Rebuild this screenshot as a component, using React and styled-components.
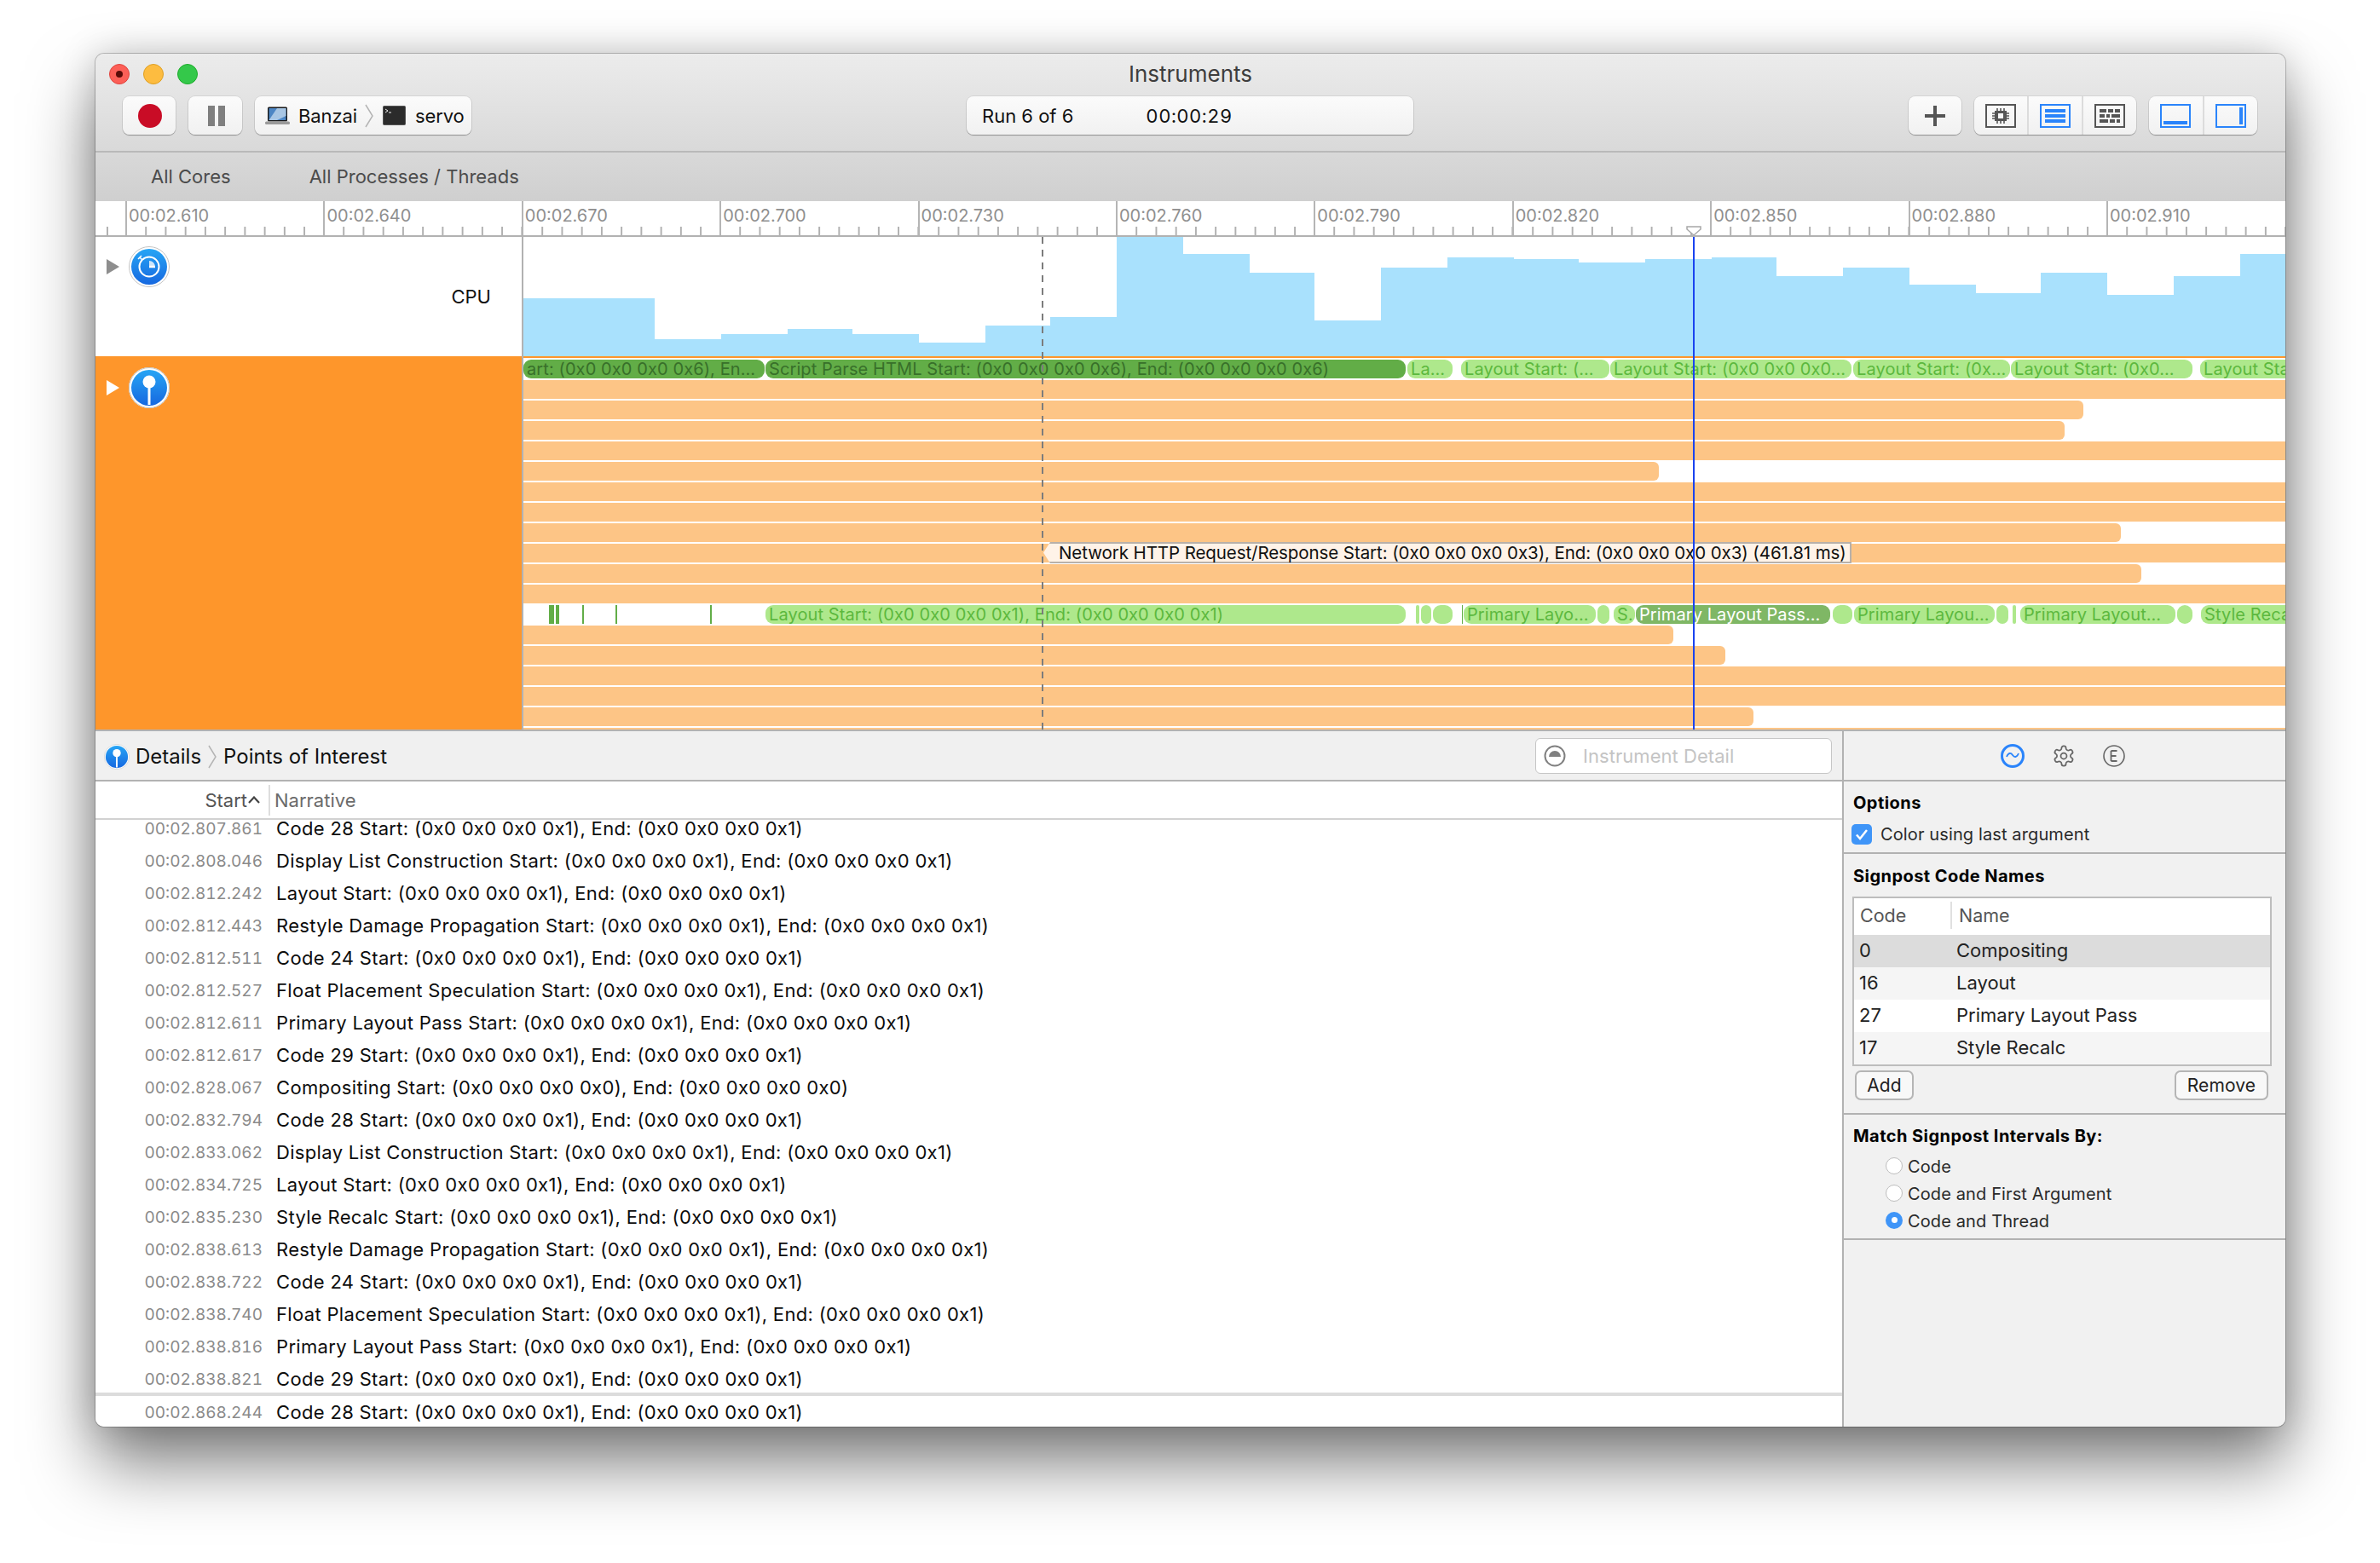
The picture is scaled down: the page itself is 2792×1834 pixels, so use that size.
import styled, { createGlobalStyle } from "styled-components";

const GlobalStyle = createGlobalStyle`
  html, body {
    margin: 0;
    height: 100%;
    background: #fff;
    overflow: hidden;
  }
  body {
    font-family: "Inter", "Liberation Sans", sans-serif;
    color: #111;
  }
  * { box-sizing: border-box; }
`;

const Win = styled.div`
  margin: 63px 0 0 112px;
  width: 2569px;
  height: 1611px;
  border-radius: 10px;
  overflow: hidden;
  display: flex;
  flex-direction: column;
  background: #f0f0f0;
  box-shadow: 0 0 0 1px rgba(0, 0, 0, 0.22), 0 44px 80px rgba(0, 0, 0, 0.5),
    0 0 44px rgba(0, 0, 0, 0.18);
`;

const Header = styled.header`
  height: 173px;
  flex: none;
  display: flex;
  flex-direction: column;
  background: linear-gradient(#ececec, #cfcfcf);
`;

const TitleBar = styled.div`
  height: 50px;
  flex: none;
  display: grid;
  grid-template-columns: 1fr auto 1fr;
  align-items: center;
  padding: 0 16px 3px;
`;

const Lights = styled.div`
  display: flex;
  gap: 16px;
`;

const Light = styled.span`
  width: 24px;
  height: 24px;
  border-radius: 50%;
  background: ${(p) => p.$color};
  border: 1px solid ${(p) => p.$edge};
  display: flex;
  align-items: center;
  justify-content: center;
  &::after {
    content: "";
    display: ${(p) => (p.$dot ? "block" : "none")};
    width: 8px;
    height: 8px;
    border-radius: 50%;
    background: #5a0b07;
  }
`;

const Title = styled.div`
  font-size: 26px;
  color: #3d3d3d;
`;

const ToolRow = styled.div`
  height: 66px;
  flex: none;
  display: grid;
  grid-template-columns: 1fr auto 1fr;
  align-items: start;
  padding: 0 33px 0 32px;
  border-bottom: 2px solid #b9b9b9;
`;

const ToolGroup = styled.div`
  display: flex;
  gap: 15px;
  justify-content: ${(p) => (p.$end ? "flex-end" : "flex-start")};
`;

const Btn = styled.div`
  height: 45px;
  width: ${(p) => p.$w}px;
  display: flex;
  align-items: center;
  border-radius: 8px;
  background: linear-gradient(#fbfbfb, #f1f1f1);
  box-shadow: 0 0 0 1px rgba(0, 0, 0, 0.07), 0 1px 1px rgba(0, 0, 0, 0.3);
  justify-content: ${(p) => (p.$left ? "flex-start" : "center")};
  padding-left: ${(p) => p.$nudge || 0}px;
  font-size: 22px;
  color: #111;
`;

const Cell = styled.div`
  flex: 1;
  height: 100%;
  display: flex;
  align-items: center;
  justify-content: center;
  & + & {
    border-left: 2px solid #dcdcdc;
  }
`;

const PathBtn = styled(Btn)`
  padding-left: 12px;
`;

const PathName = styled.span`
  display: flex;
  margin: ${(p) => p.$m};
  letter-spacing: -0.1px;
`;

const RunBox = styled(Btn)`
  padding-left: 18px;
`;

const RunTime = styled.span`
  margin-left: 85px;
  font-variant-numeric: tabular-nums;
  letter-spacing: 0.5px;
`;

const FilterBar = styled.div`
  flex: 1;
  display: flex;
  align-items: center;
  padding-left: 65px;
  gap: 92px;
  font-size: 22px;
  color: #4c4c4c;
  padding-bottom: 2px;
`;

const Ruler = styled.div`
  position: relative;
  height: 42px;
  flex: none;
  display: flex;
  background: #fff;
  border-bottom: 2px solid #b2b2b2;
  overflow: hidden;
`;

const RulerSeg = styled.div`
  flex: none;
  width: ${(p) => p.$w}px;
  height: 40px;
  padding: 5px 0 0 2px;
  font-size: 20px;
  line-height: 24px;
  white-space: nowrap;
  color: #8f8f8f;
  border-left: ${(p) => (p.$lead ? "none" : "2px solid #b5b5b5")};
  background-image: linear-gradient(to right, #b0b0b0 1.5px, transparent 1.5px);
  background-size: 23.24px 10px;
  background-position: ${(p) => (p.$lead ? "13px" : "-2px")} bottom;
  background-repeat: repeat-x;
`;

const Playhead = styled.svg`
  position: absolute;
  left: 1866px;
  bottom: 0;
`;

const Tracks = styled.div`
  position: relative;
  height: 580px;
  flex: none;
  display: flex;
  flex-direction: column;
  border-bottom: 2px solid #b2b2b2;
  background: #fff;
`;

const TrackRow = styled.div`
  display: flex;
  height: ${(p) => p.$h}px;
  flex: none;
`;

const TrackHead = styled.div`
  position: relative;
  width: 502px;
  flex: none;
  background: ${(p) => p.$bg};
  border-right: 2px solid #b2b2b2;
  display: flex;
  align-items: flex-start;
  padding: ${(p) => p.$pad};
  gap: 11px;
`;

const Disclosure = styled.span`
  width: 0;
  height: 0;
  margin-top: ${(p) => p.$mt}px;
  border-left: 15px solid ${(p) => p.$color};
  border-top: 9px solid transparent;
  border-bottom: 9px solid transparent;
`;

const TrackLabel = styled.span`
  position: absolute;
  right: 36px;
  top: 57px;
  font-size: 22px;
  line-height: 26px;
`;

const CpuArea = styled.div`
  flex: 1;
`;

const SignpostArea = styled.div`
  flex: 1;
  min-width: 0;
  border-top: 2px solid #fe962b;
  padding-top: 2px;
  display: flex;
  flex-direction: column;
  gap: 2px;
  overflow: hidden;
`;

const LaneRow = styled.div`
  position: relative;
  height: 22px;
  flex: none;
`;

const OrangeBar = styled.div`
  height: 22px;
  background: #fdc586;
  border-radius: ${(p) => (p.$short ? "0 6px 6px 0" : "0")};
`;

const Seg = styled.div`
  position: absolute;
  top: 0;
  height: 22px;
  border-radius: 9px;
  padding-left: 4px;
  font-size: 20px;
  line-height: 22px;
  letter-spacing: 0.1px;
  white-space: nowrap;
  overflow: hidden;
  background: ${(p) =>
    p.$kind === "dark" ? "#62ad47" : p.$kind === "mid" ? "#7fb765" : "#aee88c"};
  color: ${(p) =>
    p.$kind === "dark" ? "#38702a" : p.$kind === "mid" ? "#fff" : "#5cb83e"};
`;

const Stroke = styled.div`
  position: absolute;
  top: 0;
  height: 22px;
  background: #62ad47;
`;

const Note = styled.div`
  position: absolute;
  left: 610px;
  top: -2px;
  width: 948px;
  height: 25px;
  z-index: 1;
  display: flex;
  align-items: center;
  padding-left: 18px;
  font-size: 20.5px;
  white-space: nowrap;
  letter-spacing: -0.08px;
  color: #111;
  background: #fff3e8;
  border: 2px solid #b8b1aa;
  border-left: none;
  clip-path: polygon(0 50%, 8px 0, 100% 0, 100% 100%, 8px 100%);
`;

const DashLine = styled.div`
  position: absolute;
  left: 1110px;
  top: 0;
  bottom: 0;
  width: 2px;
  z-index: 2;
  background: repeating-linear-gradient(#7c7c7c 0 8px, transparent 8px 15px);
`;

const BlueLine = styled.div`
  position: absolute;
  left: 1874px;
  top: 0;
  bottom: 0;
  width: 2px;
  z-index: 2;
  background: #1a44f0;
`;

const Bottom = styled.div`
  flex: 1;
  min-height: 0;
  display: flex;
`;

const DetailPane = styled.section`
  flex: 1;
  min-width: 0;
  display: flex;
  flex-direction: column;
  background: #fff;
`;

const DetailBar = styled.div`
  height: 59px;
  flex: none;
  display: flex;
  align-items: center;
  padding: 2px 12px 0 10px;
  background: #f0f0f0;
  border-bottom: 2px solid #b2b2b2;
  font-size: 24px;
  color: #111;
`;

const Crumb = styled.span`
  display: flex;
  margin-left: ${(p) => p.$ml}px;
`;

const SearchBox = styled.div`
  margin: -2px 0 0 auto;
  width: 348px;
  height: 42px;
  display: flex;
  align-items: center;
  gap: 20px;
  padding-left: 9px;
  background: #fff;
  border: 1.5px solid #c6c6c6;
  border-radius: 6px;
  font-size: 22px;
  letter-spacing: 0.05px;
  color: #c4c4c4;
`;

const TableHead = styled.div`
  height: 45px;
  flex: none;
  display: flex;
  align-items: center;
  border-bottom: 2px solid #d2d2d2;
  font-size: 22px;
  color: #6b6b6b;
`;

const StartCol = styled.div`
  width: 205px;
  height: 36px;
  display: flex;
  align-items: center;
  justify-content: flex-end;
  gap: 1px;
  padding-right: 10px;
  border-right: 2px solid #dedede;
  color: #555;
`;

const NarrativeCol = styled.div`
  padding-left: 5px;
`;

const RowList = styled.div`
  flex: 1;
  overflow: hidden;
`;

const RowTrack = styled.div`
  margin-top: -9px;
`;

const Row = styled.div`
  height: 38px;
  box-sizing: content-box;
  display: flex;
  align-items: center;
  ${(p) => p.$divided && "border-top: 4px solid #dcdcdc; margin-top: -3px;"}
`;

const RowTime = styled.span`
  width: 196px;
  text-align: right;
  font-size: 19px;
  font-variant-numeric: tabular-nums;
  color: #8a8a8a;
`;

const RowText = styled.span`
  margin-left: 16px;
  font-size: 22px;
  letter-spacing: 0.33px;
  white-space: nowrap;
  color: #0d0d0d;
`;

const Inspector = styled.aside`
  width: 520px;
  flex: none;
  display: flex;
  flex-direction: column;
  background: #f1f1f1;
  border-left: 2px solid #b2b2b2;
  font-size: 20px;
  letter-spacing: 0.12px;
  color: #2a2a2a;
`;

const InspTabs = styled.div`
  height: 59px;
  flex: none;
  display: flex;
  align-items: center;
  justify-content: center;
  gap: 31px;
  padding-right: 4px;
  border-bottom: 2px solid #b2b2b2;
`;

const Section = styled.div`
  height: ${(p) => p.$h}px;
  flex: none;
  display: flex;
  flex-direction: column;
  padding: ${(p) => p.$pad};
  border-bottom: 2px solid #b2b2b2;
`;

const Heading = styled.div`
  font-size: 20px;
  line-height: 24px;
  font-weight: 700;
  letter-spacing: 0.45px;
  color: #000;
  margin-left: 11px;
`;

const CheckRow = styled.div`
  display: flex;
  align-items: center;
  gap: 10px;
  margin: 13px 0 0 9px;
  line-height: 24px;
`;

const CheckBox = styled.span`
  width: 24px;
  height: 24px;
  border-radius: 5px;
  background: #3f95f8;
  display: flex;
  align-items: center;
  justify-content: center;
`;

const CodeTable = styled.div`
  width: 492px;
  height: 199px;
  margin: 12px 0 0 10px;
  border: 2px solid #bdbdbd;
  background: #fff;
  flex: none;
  letter-spacing: 0;
`;

const CodeHead = styled.div`
  height: 43px;
  display: flex;
  align-items: center;
  padding-bottom: 3px;
  font-size: 21.5px;
  color: #555;
`;

const CodeHeadCell = styled.div`
  width: ${(p) => p.$w}px;
  height: 32px;
  display: flex;
  align-items: center;
  padding-left: ${(p) => p.$pl}px;
  ${(p) => p.$rule && "border-right: 2px solid #e0e0e0;"}
`;

const CodeRow = styled.div`
  height: 38px;
  display: flex;
  align-items: center;
  padding-bottom: 3px;
  font-size: 22px;
  background: ${(p) => p.$bg};
  color: #222;
`;

const CodeCell = styled.span`
  width: 120px;
  padding-left: 6px;
`;

const ButtonRow = styled.div`
  display: flex;
  justify-content: space-between;
  margin: 5px 20px 0 13px;
`;

const SmallButton = styled.div`
  height: 35px;
  width: ${(p) => p.$w}px;
  display: flex;
  align-items: center;
  justify-content: center;
  border: 2px solid #b5b5b5;
  border-radius: 7px;
  background: #f8f8f8;
  font-size: 21px;
  color: #222;
`;

const RadioRow = styled.div`
  display: flex;
  align-items: center;
  height: 32px;
  margin-left: 49px;
  gap: 6px;
`;

const RadioList = styled.div`
  margin-top: 8px;
`;

const Radio = styled.span`
  width: 20px;
  height: 20px;
  border-radius: 50%;
  margin-top: -3px;
  background: ${(p) => (p.$on ? "#3f95f8" : "#fff")};
  border: ${(p) => (p.$on ? "none" : "1.5px solid #bdbdbd")};
  display: flex;
  align-items: center;
  justify-content: center;
  &::after {
    content: "";
    display: ${(p) => (p.$on ? "block" : "none")};
    width: 7px;
    height: 7px;
    border-radius: 50%;
    background: #fff;
  }
`;

const RULER_TIMES = [
  "00:02.610", "00:02.640", "00:02.670", "00:02.700", "00:02.730", "00:02.760",
  "00:02.790", "00:02.820", "00:02.850", "00:02.880", "00:02.910",
];

// x start, x end, top of bar, all in page pixels
const CPU_BARS = [
  [614, 768, 350], [768, 846, 398], [846, 924, 392], [924, 1000, 386],
  [1000, 1078, 392], [1078, 1156, 402], [1156, 1232, 382], [1232, 1310, 372],
  [1310, 1388, 278], [1388, 1466, 298], [1466, 1542, 320], [1542, 1620, 376],
  [1620, 1698, 314], [1698, 1776, 302], [1776, 1852, 304], [1852, 1930, 308],
  [1930, 2008, 304], [2008, 2084, 302], [2084, 2162, 324], [2162, 2240, 314],
  [2240, 2318, 334], [2318, 2394, 344], [2394, 2472, 320], [2472, 2550, 346],
  [2550, 2628, 324], [2628, 2681, 298],
];

const TOP_SEGS = [
  [614, 897, "dark", "art: (0x0 0x0 0x0 0x6), En…"],
  [898, 1649, "dark", "Script Parse HTML Start: (0x0 0x0 0x0 0x6), End: (0x0 0x0 0x0 0x6)"],
  [1651, 1704, "light", "La…"],
  [1714, 1888, "light", "Layout Start: (…"],
  [1889, 2172, "light", "Layout Start: (0x0 0x0 0x0…"],
  [2174, 2358, "light", "Layout Start: (0x…"],
  [2359, 2572, "light", "Layout Start: (0x0…"],
  [2581, 2690, "light", "Layout Start: (0x0 0x0"],
];

const MID_SEGS = [
  [898, 1649, "light", "Layout Start: (0x0 0x0 0x0 0x1), End: (0x0 0x0 0x0 0x1)"],
  [1661, 1665, "light", ""],
  [1667, 1679, "light", ""],
  [1681, 1704, "light", ""],
  [1717, 1872, "light", "Primary Layo…"],
  [1874, 1888, "light", ""],
  [1893, 1918, "light", "S."],
  [1919, 2147, "mid", "Primary Layout Pass…"],
  [2150, 2173, "light", ""],
  [2175, 2340, "light", "Primary Layou…"],
  [2342, 2356, "light", ""],
  [2361, 2365, "light", ""],
  [2370, 2552, "light", "Primary Layout…"],
  [2554, 2572, "light", ""],
  [2582, 2690, "light", "Style Recalc Start"],
];

const MID_STROKES = [[644, 6], [652, 4], [683, 2], [722, 2], [833, 2], [1715, 1]];

// right end of each orange lane, null when it runs off the view
const LANES = [
  null, 2444, 2422, null, 1946, null, null, 2488, null, 2512, null, "mid",
  1963, 2024, null, null, 2057, null,
];

const ARG1 = "Start: (0x0 0x0 0x0 0x1), End: (0x0 0x0 0x0 0x1)";
const ROWS = [
  ["807.861", `Code 28 ${ARG1}`],
  ["808.046", `Display List Construction ${ARG1}`],
  ["812.242", `Layout ${ARG1}`],
  ["812.443", `Restyle Damage Propagation ${ARG1}`],
  ["812.511", `Code 24 ${ARG1}`],
  ["812.527", `Float Placement Speculation ${ARG1}`],
  ["812.611", `Primary Layout Pass ${ARG1}`],
  ["812.617", `Code 29 ${ARG1}`],
  ["828.067", "Compositing Start: (0x0 0x0 0x0 0x0), End: (0x0 0x0 0x0 0x0)"],
  ["832.794", `Code 28 ${ARG1}`],
  ["833.062", `Display List Construction ${ARG1}`],
  ["834.725", `Layout ${ARG1}`],
  ["835.230", `Style Recalc ${ARG1}`],
  ["838.613", `Restyle Damage Propagation ${ARG1}`],
  ["838.722", `Code 24 ${ARG1}`],
  ["838.740", `Float Placement Speculation ${ARG1}`],
  ["838.816", `Primary Layout Pass ${ARG1}`],
  ["838.821", `Code 29 ${ARG1}`],
  ["868.244", `Code 28 ${ARG1}`],
];

const CODES = [
  ["0", "Compositing", "#dcdcdc"],
  ["16", "Layout", "#f5f5f5"],
  ["27", "Primary Layout Pass", "#fff"],
  ["17", "Style Recalc", "#f5f5f5"],
];

function Chevron({ h = 28 }) {
  return (
    <svg width="10" height={h} viewBox="0 0 10 28" fill="none">
      <path d="M1 1l8 13-8 13" stroke="#b4b4b4" strokeWidth="1.5" />
    </svg>
  );
}

function BlueBadge({ size, children }) {
  return (
    <svg width={size} height={size} viewBox="0 0 48 48">
      <defs>
        <linearGradient id="badge" x1="0" y1="0" x2="0" y2="1">
          <stop offset="0" stopColor="#27a5f5" />
          <stop offset="1" stopColor="#1668e0" />
        </linearGradient>
      </defs>
      <circle cx="24" cy="24" r="24" fill="#fff" />
      <circle cx="24" cy="24" r="23.5" fill="none" stroke="#c4c4c4" strokeWidth="1" />
      <circle cx="24" cy="24" r="21" fill="url(#badge)" />
      {children}
    </svg>
  );
}

const ClockMark = (
  <g fill="none" stroke="#fff" strokeWidth="2">
    <circle cx="24" cy="24" r="11.5" />
    <path d="M24 17v7h7a7 7 0 0 0-7-7z" fill="#cde6fb" stroke="none" />
    <path d="M24 24h7" strokeWidth="2.5" />
    <path d="M13 13l3 3M11 15l4-4" strokeWidth="1.6" />
  </g>
);

const PinMark = (
  <g fill="#fff">
    <circle cx="24" cy="17" r="7.5" />
    <rect x="22.5" y="20" width="3" height="24" />
  </g>
);

function Laptop() {
  return (
    <svg width="29" height="22" viewBox="0 0 29 22">
      <rect x="3" y="0.5" width="23" height="17" rx="1.5" fill="#1a1a1a" />
      <rect x="4.5" y="2" width="20" height="14" fill="#4d86c4" />
      <path d="M14 2h10.5v9L14 16H4.5z" fill="#a8c6e4" />
      <rect x="0" y="17.5" width="29" height="3.5" rx="1.5" fill="#9a9a9a" />
    </svg>
  );
}

function Terminal() {
  return (
    <svg width="27" height="23" viewBox="0 0 27 23">
      <rect x="0.5" y="0.5" width="26" height="22" rx="1" fill="#2b2b2b" stroke="#555" />
      <path d="M3 4l3 2-3 2M7 8h3" stroke="#eee" strokeWidth="1" fill="none" />
    </svg>
  );
}

function PanelIcon({ color, children }) {
  return (
    <svg width="36" height="28" viewBox="0 0 36 28">
      <rect x="1" y="1" width="34" height="26" fill="none" stroke={color} strokeWidth="2" />
      {children}
    </svg>
  );
}

const GRAY = "#555";
const BLUE = "#2a84fb";

function ChipIcon() {
  return (
    <PanelIcon color={GRAY}>
      <path
        d="M11 8h14v12H11z M15 11h6v6h-6z"
        fill={GRAY}
        fillRule="evenodd"
      />
      <path d="M14 5v3M18 5v3M22 5v3M14 20v3M18 20v3M22 20v3M8 11h3M8 14h3M8 17h3M25 11h3M25 14h3M25 17h3" stroke={GRAY} strokeWidth="1.6" />
    </PanelIcon>
  );
}

function ListIcon() {
  return (
    <PanelIcon color={BLUE}>
      <rect x="6" y="6" width="24" height="4" fill={BLUE} />
      <rect x="6" y="12" width="24" height="4" fill={BLUE} />
      <rect x="6" y="18" width="24" height="4" fill={BLUE} />
    </PanelIcon>
  );
}

function BricksIcon() {
  const blocks = [
    [6, 6, 8], [16, 6, 6], [24, 6, 6],
    [6, 12, 6], [14, 12, 4], [20, 12, 10],
    [6, 18, 10], [18, 18, 6], [26, 18, 4],
  ];
  return (
    <PanelIcon color={GRAY}>
      {blocks.map(([x, y, w]) => (
        <rect key={`${x}-${y}`} x={x} y={y} width={w} height="4" fill={GRAY} />
      ))}
    </PanelIcon>
  );
}

function App() {
  return (
    <>
      <GlobalStyle />
      <Win>
        <Header>
          <TitleBar>
            <Lights>
              <Light $color="#fc5f57" $edge="#e0443e" $dot />
              <Light $color="#fdbc40" $edge="#dfa023" />
              <Light $color="#34c84a" $edge="#1dad2b" />
            </Lights>
            <Title>Instruments</Title>
            <span />
          </TitleBar>
          <ToolRow>
            <ToolGroup>
              <Btn $w={62} $nudge={2}>
                <svg width="28" height="28" viewBox="0 0 28 28">
                  <circle cx="14" cy="14" r="14" fill="#c90c26" />
                </svg>
              </Btn>
              <Btn $w={63} $nudge={2}>
                <svg width="20" height="24" viewBox="0 0 20 24">
                  <rect x="0" width="8" height="24" fill="#7f7f7f" />
                  <rect x="12" width="8" height="24" fill="#7f7f7f" />
                </svg>
              </Btn>
              <PathBtn $w={254} $left>
                <Laptop />
                <PathName $m="0 9px 0 10px">Banzai</PathName>
                <Chevron />
                <PathName $m="0 11px 0 11px">
                  <Terminal />
                </PathName>
                <PathName $m="0">servo</PathName>
              </PathBtn>
            </ToolGroup>
            <RunBox $w={524} $left>
              Run 6 of 6
              <RunTime>00:00:29</RunTime>
            </RunBox>
            <ToolGroup $end>
              <Btn $w={62}>
                <svg width="24" height="24" viewBox="0 0 24 24">
                  <path d="M10 0h4v10h10v4H14v10h-4V14H0v-4h10z" fill="#555" />
                </svg>
              </Btn>
              <Btn $w={190}>
                <Cell><ChipIcon /></Cell>
                <Cell><ListIcon /></Cell>
                <Cell><BricksIcon /></Cell>
              </Btn>
              <Btn $w={127}>
                <Cell>
                  <PanelIcon color={BLUE}>
                    <rect x="4" y="20" width="28" height="4" fill={BLUE} />
                  </PanelIcon>
                </Cell>
                <Cell>
                  <PanelIcon color={BLUE}>
                    <rect x="28" y="4" width="4" height="20" fill={BLUE} />
                  </PanelIcon>
                </Cell>
              </Btn>
            </ToolGroup>
          </ToolRow>
          <FilterBar>
            <span>All Cores</span>
            <span>All Processes / Threads</span>
          </FilterBar>
        </Header>

        <Ruler>
          <RulerSeg $w={35} $lead />
          {RULER_TIMES.map((t) => (
            <RulerSeg key={t} $w={232.4}>
              {t}
            </RulerSeg>
          ))}
          <Playhead width="18" height="11" viewBox="0 0 18 11">
            <path d="M1 1h16v3l-8 7-8-7z" fill="#fff" stroke="#a8a8a8" strokeWidth="1.5" />
          </Playhead>
        </Ruler>

        <Tracks>
          <TrackRow $h={140}>
            <TrackHead $bg="#fff" $pad="11px 0 0 13px">
              <Disclosure $color="#8e8e8e" $mt={15} />
              <BlueBadge size={48}>{ClockMark}</BlueBadge>
              <TrackLabel>CPU</TrackLabel>
            </TrackHead>
            <CpuArea>
              <svg width="2067" height="140" viewBox="614 278 2067 140">
                {CPU_BARS.map(([a, b, top]) => (
                  <rect key={a} x={a} y={top} width={b - a} height={418 - top} fill="#a9e1fd" />
                ))}
              </svg>
            </CpuArea>
          </TrackRow>
          <TrackRow $h={438}>
            <TrackHead $bg="#fe962b" $pad="13px 0 0 13px">
              <Disclosure $color="#fff" $mt={15} />
              <BlueBadge size={48}>{PinMark}</BlueBadge>
            </TrackHead>
            <SignpostArea>
              <LaneRow>
                {TOP_SEGS.map(([a, b, kind, text]) => (
                  <Seg key={a} $kind={kind} style={{ left: a - 614, width: b - a }}>
                    {text}
                  </Seg>
                ))}
              </LaneRow>
              {LANES.map((end, i) =>
                end === "mid" ? (
                  <LaneRow key={i}>
                    {MID_STROKES.map(([x, w]) => (
                      <Stroke key={x} style={{ left: x - 614, width: w }} />
                    ))}
                    {MID_SEGS.map(([a, b, kind, text]) => (
                      <Seg key={a} $kind={kind} style={{ left: a - 614, width: b - a }}>
                        {text}
                      </Seg>
                    ))}
                  </LaneRow>
                ) : (
                  <LaneRow key={i}>
                    <OrangeBar $short={!!end} style={{ width: end ? end - 614 : "100%" }} />
                    {i === 8 && (
                      <Note>
                        Network HTTP Request/Response Start: (0x0 0x0 0x0 0x3), End: (0x0 0x0 0x0 0x3) (461.81 ms)
                      </Note>
                    )}
                  </LaneRow>
                )
              )}
              <LaneRow>
                <OrangeBar />
              </LaneRow>
            </SignpostArea>
          </TrackRow>
          <DashLine />
          <BlueLine />
        </Tracks>

        <Bottom>
          <DetailPane>
            <DetailBar>
              <BlueBadge size={30}>{PinMark}</BlueBadge>
              <Crumb $ml={7}>Details</Crumb>
              <Crumb $ml={8}>
                <Chevron />
              </Crumb>
              <Crumb $ml={8}>Points of Interest</Crumb>
              <SearchBox>
                <svg width="26" height="26" viewBox="0 0 26 26">
                  <circle cx="13" cy="13" r="11.5" fill="none" stroke="#808080" strokeWidth="2" />
                  <path d="M6 14a7 7 0 0 1 14 0z" fill="#808080" />
                </svg>
                Instrument Detail
              </SearchBox>
            </DetailBar>
            <TableHead>
              <StartCol>
                Start
                <svg width="14" height="9" viewBox="0 0 14 9">
                  <path d="M1 8l6-6.5L13 8" fill="none" stroke="#444" strokeWidth="2.2" />
                </svg>
              </StartCol>
              <NarrativeCol>Narrative</NarrativeCol>
            </TableHead>
            <RowList>
              <RowTrack>
                {ROWS.map(([time, text], i) => (
                  <Row key={time} $divided={i === ROWS.length - 1}>
                    <RowTime>00:02.{time}</RowTime>
                    <RowText>{text}</RowText>
                  </Row>
                ))}
              </RowTrack>
            </RowList>
          </DetailPane>

          <Inspector>
            <InspTabs>
              <svg width="30" height="30" viewBox="0 0 30 30">
                <circle cx="15" cy="15" r="12.5" fill="none" stroke="#2a84fb" strokeWidth="3" />
                <path d="M8 16c2-5 5-5 7-2s5 3 7-2" fill="none" stroke="#2a84fb" strokeWidth="1.8" />
              </svg>
              <svg width="28" height="28" viewBox="0 0 24 24" fill="none" stroke="#666" strokeWidth="1.5">
                <path d="M12.2 2h-.4a2 2 0 0 0-2 2v.2a2 2 0 0 1-1 1.7l-.4.3a2 2 0 0 1-2 0l-.2-.1a2 2 0 0 0-2.7.7l-.2.4a2 2 0 0 0 .7 2.7l.2.1a2 2 0 0 1 1 1.7v.5a2 2 0 0 1-1 1.7l-.2.1a2 2 0 0 0-.7 2.7l.2.4a2 2 0 0 0 2.7.7l.2-.1a2 2 0 0 1 2 0l.4.3a2 2 0 0 1 1 1.7v.2a2 2 0 0 0 2 2h.4a2 2 0 0 0 2-2v-.2a2 2 0 0 1 1-1.7l.4-.3a2 2 0 0 1 2 0l.2.1a2 2 0 0 0 2.7-.7l.2-.4a2 2 0 0 0-.7-2.7l-.2-.1a2 2 0 0 1-1-1.7v-.5a2 2 0 0 1 1-1.7l.2-.1a2 2 0 0 0 .7-2.7l-.2-.4a2 2 0 0 0-2.7-.7l-.2.1a2 2 0 0 1-2 0l-.4-.3a2 2 0 0 1-1-1.7V4a2 2 0 0 0-2-2z" />
                <circle cx="12" cy="12" r="3" />
              </svg>
              <svg width="28" height="28" viewBox="0 0 28 28">
                <circle cx="14" cy="14" r="12" fill="none" stroke="#666" strokeWidth="1.6" />
                <path d="M10.5 8h7M10.5 14h6M10.5 20h7M10.5 8v12" fill="none" stroke="#666" strokeWidth="1.8" />
              </svg>
            </InspTabs>
            <Section $h={85} $pad="13px 0 0">
              <Heading>Options</Heading>
              <CheckRow>
                <CheckBox>
                  <svg width="16" height="14" viewBox="0 0 16 14">
                    <path d="M2 7.5l4 4.5 8-10" fill="none" stroke="#fff" strokeWidth="2.5" />
                  </svg>
                </CheckBox>
                Color using last argument
              </CheckRow>
            </Section>
            <Section $h={306} $pad="14px 0 0">
              <Heading>Signpost Code Names</Heading>
              <CodeTable>
                <CodeHead>
                  <CodeHeadCell $w={115} $pl={7} $rule>Code</CodeHeadCell>
                  <CodeHeadCell $pl={8}>Name</CodeHeadCell>
                </CodeHead>
                {CODES.map(([code, name, bg]) => (
                  <CodeRow key={code} $bg={bg}>
                    <CodeCell>{code}</CodeCell>
                    <span>{name}</span>
                  </CodeRow>
                ))}
              </CodeTable>
              <ButtonRow>
                <SmallButton $w={69}>Add</SmallButton>
                <SmallButton $w={110}>Remove</SmallButton>
              </ButtonRow>
            </Section>
            <Section $h={147} $pad="13px 0 0">
              <Heading>Match Signpost Intervals By:</Heading>
              <RadioList>
                <RadioRow>
                  <Radio />
                  Code
                </RadioRow>
                <RadioRow>
                  <Radio />
                  Code and First Argument
                </RadioRow>
                <RadioRow>
                  <Radio $on />
                  Code and Thread
                </RadioRow>
              </RadioList>
            </Section>
          </Inspector>
        </Bottom>
      </Win>
    </>
  );
}

export default App;
